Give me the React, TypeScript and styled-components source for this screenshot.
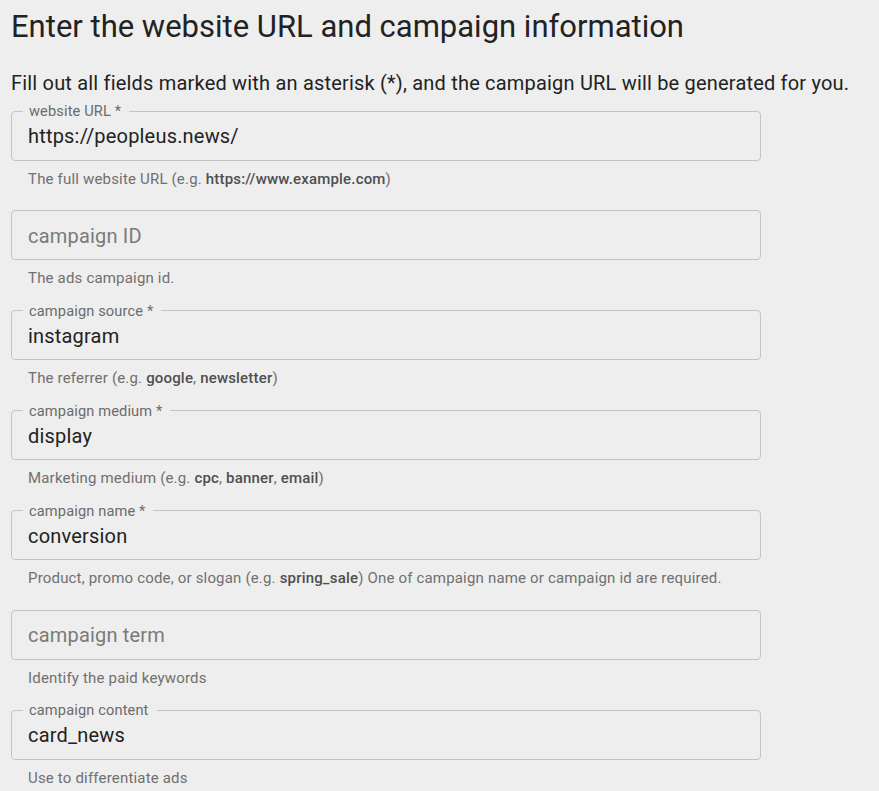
import React from "react";
import styled, { createGlobalStyle } from "styled-components";

const GlobalStyle = createGlobalStyle`
  html, body {
    margin: 0;
    padding: 0;
    background: #eeeeee;
  }
  body {
    font-family: Roboto, "Liberation Sans", Arial, sans-serif;
    -webkit-font-smoothing: antialiased;
  }
`;

const Page = styled.main`
  padding: 7px 11px 0 11px;
  box-sizing: border-box;
  width: 879px;
  min-height: 791px;
  overflow: hidden;
`;

const Heading = styled.h1`
  margin: 0;
  font-size: 31px;
  font-weight: 400;
  line-height: 40px;
  color: #222222;
`;

const Intro = styled.p`
  margin: 21px 0 5px 0;
  font-size: 20px;
  line-height: 30px;
  letter-spacing: 0.19px;
  color: #222222;
`;

const Form = styled.form`
  display: flex;
  flex-direction: column;
  width: 750px;
`;

const Group = styled.div`
  display: flex;
  flex-direction: column;
  padding-bottom: 14.4px;
`;

const Outline = styled.fieldset`
  margin: 0;
  padding: 0 16px 11.5px 11px;
  border: 1px solid #c4c4c4;
  border-radius: 4px;
  min-width: 0;
`;

const Legend = styled.legend<{ $hidden?: boolean }>`
  padding: ${(p) => (p.$hidden ? "0" : "0 8px 0 6px")};
  max-width: ${(p) => (p.$hidden ? "0.01px" : "none")};
  overflow: hidden;
  font-size: 14.6px;
  line-height: 16px;
  height: 16px;
  letter-spacing: 0.14px;
  color: #6b6b6b;
  white-space: nowrap;

  span {
    visibility: ${(p) => (p.$hidden ? "hidden" : "visible")};
  }
`;

const Input = styled.input`
  display: block;
  box-sizing: border-box;
  width: 100%;
  height: 24px;
  margin: 5px 0 0 5px;
  padding: 0;
  border: 0;
  outline: none;
  background: transparent;
  font-family: inherit;
  font-size: 20px;
  letter-spacing: 0.19px;
  color: #222222;

  &::placeholder {
    color: #7a7a7a;
    opacity: 1;
  }
`;

const Helper = styled.p`
  margin: 8px 0 0 17px;
  font-size: 15px;
  line-height: 20px;
  letter-spacing: 0.18px;
  color: #707070;

  b {
    font-weight: 500;
    color: #4f4f4f;
  }
`;

type Field = {
  label: string;
  value: string;
  helper: React.ReactNode;
};

const fields: Field[] = [
  {
    label: "website URL *",
    value: "https://peopleus.news/",
    helper: (
      <>
        The full website URL (e.g. <b>https://www.example.com</b>)
      </>
    ),
  },
  {
    label: "campaign ID",
    value: "",
    helper: <>The ads campaign id.</>,
  },
  {
    label: "campaign source *",
    value: "instagram",
    helper: (
      <>
        The referrer (e.g. <b>google</b>, <b>newsletter</b>)
      </>
    ),
  },
  {
    label: "campaign medium *",
    value: "display",
    helper: (
      <>
        Marketing medium (e.g. <b>cpc</b>, <b>banner</b>, <b>email</b>)
      </>
    ),
  },
  {
    label: "campaign name *",
    value: "conversion",
    helper: (
      <>
        Product, promo code, or slogan (e.g. <b>spring_sale</b>) One of
        campaign name or campaign id are required.
      </>
    ),
  },
  {
    label: "campaign term",
    value: "",
    helper: <>Identify the paid keywords</>,
  },
  {
    label: "campaign content",
    value: "card_news",
    helper: <>Use to differentiate ads</>,
  },
];

export default function App() {
  return (
    <>
      <GlobalStyle />
      <Page>
        <Heading>Enter the website URL and campaign information</Heading>
        <Intro>
          Fill out all fields marked with an asterisk (*), and the campaign URL
          will be generated for you.
        </Intro>
        <Form onSubmit={(e) => e.preventDefault()}>
          {fields.map((f) => {
            const empty = f.value === "";
            return (
              <Group key={f.label}>
                <Outline>
                  <Legend $hidden={empty}>
                    <span>{f.label}</span>
                  </Legend>
                  <Input
                    readOnly
                    value={f.value}
                    placeholder={empty ? f.label : undefined}
                    aria-label={f.label}
                  />
                </Outline>
                <Helper>{f.helper}</Helper>
              </Group>
            );
          })}
        </Form>
      </Page>
    </>
  );
}
